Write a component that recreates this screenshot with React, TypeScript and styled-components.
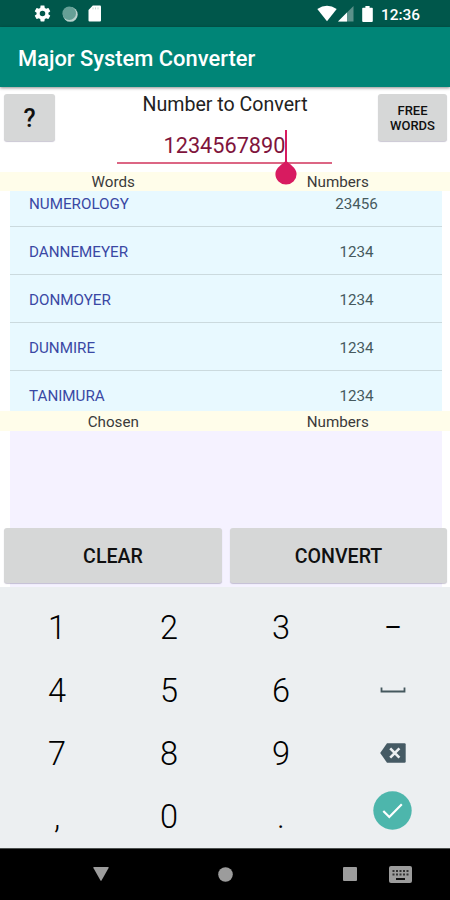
import React from "react";
import styled, { createGlobalStyle } from "styled-components";

const GlobalStyle = createGlobalStyle`
  * { box-sizing: border-box; }
  body { margin: 0; background: #fff; font-family: Roboto, "Liberation Sans", sans-serif; }
  button { font-family: inherit; border: 0; padding: 0; margin: 0; }
`;

const Screen = styled.div`
  width: 450px;
  height: 900px;
  display: flex;
  flex-direction: column;
  overflow: hidden;
  background: #fff;
`;

const StatusBar = styled.header`
  flex: 0 0 27px;
  display: flex;
  align-items: center;
  justify-content: space-between;
  padding: 0 30px 0 33px;
  background: #00574b;
  color: #fff;
`;

const StatusGroup = styled.div<{ $gap: number }>`
  display: flex;
  align-items: center;
  gap: ${(p) => p.$gap}px;
`;

const Clock = styled.span`
  font-size: 15.4px;
  font-weight: 500;
  line-height: 18px;
  padding-top: 2px;
`;

const AppBar = styled.div`
  flex: 0 0 60px;
  display: flex;
  align-items: center;
  padding: 3px 18px 0;
  background: #008577;
  color: #fff;
  z-index: 1;
  box-shadow: 0 1px 3px rgba(0, 0, 0, 0.45);
`;

const Title = styled.h1`
  margin: 0;
  font-size: 21.9px;
  font-weight: 500;
`;

const InputPanel = styled.section`
  flex: 0 0 85px;
  display: grid;
  grid-template-columns: 51px 1fr 69px;
  padding: 7px 3px 0 4px;
`;

const GreyButton = styled.button<{ $size: number; $height: number; $drop?: number }>`
  height: ${(p) => p.$height}px;
  padding-top: ${(p) => p.$drop ?? 0}px;
  border-radius: 3px;
  background: #d6d7d7;
  color: #101010;
  font-size: ${(p) => p.$size}px;
  font-weight: 500;
  line-height: 15px;
  box-shadow: 0 1px 1px rgba(80, 70, 110, 0.3);
`;

const Field = styled.div`
  display: flex;
  flex-direction: column;
  align-items: center;
  margin-left: 17px;
`;

const FieldLabel = styled.label`
  font-size: 19.6px;
  line-height: 22px;
  color: #222;
`;

const NumberInput = styled.div`
  position: relative;
  width: 215px;
  height: 48px;
  margin-right: 2px;
  border-bottom: 2px solid #dc6684;
  display: flex;
  justify-content: center;
  align-items: center;
  padding: 13px 0 0 1px;
  font-size: 21.7px;
  color: #80143c;
`;

const Caret = styled.svg`
  position: absolute;
  left: 158px;
  top: 14px;
  z-index: 2;
`;

const ColumnHeader = styled.div<{ $height: number }>`
  flex: 0 0 ${(p) => p.$height}px;
  display: grid;
  grid-template-columns: 1fr 1fr;
  align-items: center;
  text-align: center;
  padding: 2px 0 0 1px;
  background: #fffdea;
  color: #3a3a3a;
  font-size: 15.2px;
  line-height: 17px;
`;

const WordList = styled.ul`
  flex: 0 0 220px;
  display: flex;
  flex-direction: column;
  justify-content: flex-end;
  margin: 0 8.5px 0 9.5px;
  padding: 0;
  overflow: hidden;
  list-style: none;
  background: #e8f9ff;
`;

const WordRow = styled.li`
  flex: 0 0 48.1px;
  display: grid;
  grid-template-columns: 262px 170px;
  align-items: center;
  padding-top: 3px;
  border-bottom: 1px solid #cbdade;
  font-size: 15.2px;

  &:last-child {
    flex-basis: 40px;
    align-items: start;
    padding-top: 15.5px;
    border-bottom: 0;
  }
`;

const Word = styled.span`
  padding-left: 19.5px;
  color: #3a48a4;
`;

const Code = styled.span`
  text-align: center;
  color: #465a5e;
`;

const ChosenPanel = styled.section`
  flex: 0 0 156px;
  display: flex;
  align-items: flex-end;
  padding: 0 3px 4px 4px;
  background: linear-gradient(#f5f2ff, #f5f2ff) 9.5px 0 / 432px 100% no-repeat;
`;

const ActionRow = styled.div`
  flex: 1;
  display: grid;
  grid-template-columns: 218px 217px;
  gap: 8px;
`;

const Keypad = styled.section`
  flex: 0 0 261px;
  display: grid;
  grid-template-columns: repeat(4, 112px);
  grid-template-rows: repeat(4, 63.25px);
  padding: 8px 1px 0;
  background: #eceff1;
`;

const Key = styled.div`
  display: flex;
  align-items: center;
  justify-content: center;
  padding-top: 2px;
  font-size: 32.5px;
  font-weight: 300;
  color: #000;
`;

const DashKey = styled(Key)`
  font-size: 27px;
  font-weight: 400;
`;

const IconKey = styled(Key)<{ $lift?: number }>`
  padding: 0 1px ${(p) => p.$lift ?? 0}px 0;
`;

const NavBar = styled.nav`
  flex: 1;
  display: grid;
  grid-template-columns: 202px 47px 76px 50px 50px;
  align-items: center;
  justify-items: center;
  padding-bottom: 1px;
  background: #000;
  color: #9c9c9c;
  border-top: 1px solid #4c504f;
`;

const GearIcon = () => (
  <svg width="19" height="19" viewBox="0 0 24 24" fill="#fff">
    <path d="M19.43 12.98c.04-.32.07-.64.07-.98s-.03-.66-.07-.98l2.11-1.65c.19-.15.24-.42.12-.64l-2-3.46c-.12-.22-.39-.3-.61-.22l-2.49 1c-.52-.4-1.08-.73-1.69-.98l-.38-2.65C14.46 2.18 14.25 2 14 2h-4c-.25 0-.46.18-.49.42l-.38 2.65c-.61.25-1.17.59-1.69.98l-2.49-1c-.23-.09-.49 0-.61.22l-2 3.46c-.13.22-.07.49.12.64l2.11 1.65c-.04.32-.07.65-.07.98s.03.66.07.98l-2.11 1.65c-.19.15-.24.42-.12.64l2 3.46c.12.22.39.3.61.22l2.49-1c.52.4 1.08.73 1.69.98l.38 2.65c.03.24.24.42.49.42h4c.25 0 .46-.18.49-.42l.38-2.65c.61-.25 1.17-.59 1.69-.98l2.49 1c.23.09.49 0 .61-.22l2-3.46c.12-.22.07-.49-.12-.64l-2.11-1.65zM12 15.5a3.5 3.5 0 1 1 0-7 3.5 3.5 0 0 1 0 7z" />
  </svg>
);

const SyncIcon = () => (
  <svg width="16" height="16" viewBox="0 0 16 16">
    <circle cx="8.3" cy="8.4" r="7.4" fill="#b9d2cd" />
    <circle cx="7.2" cy="7.2" r="6.8" fill="#65a096" />
  </svg>
);

const CardIcon = () => (
  <svg width="14" height="17" viewBox="0 0 14 17">
    <path d="M4.8 0.5H12a1 1 0 0 1 1 1v14a1 1 0 0 1-1 1H1.5a1 1 0 0 1-1-1V5z" fill="#fff" />
    <path d="M5 2.4v2M7.5 2.4v2M10 2.4v2" stroke="#c5d8d4" strokeWidth="1" />
  </svg>
);

const WifiIcon = () => (
  <svg width="20" height="17" viewBox="0 0 20 17">
    <path d="M0.3 4Q10-2.7 19.7 4L10 16.3z" fill="#fff" />
  </svg>
);

const SignalIcon = () => (
  <svg width="16" height="16" viewBox="0 0 16 16">
    <path d="M0 15.5 15.5 0v15.5z" fill="#5c918a" />
    <path d="M0 15.5 9 6.5v9z" fill="#fff" />
  </svg>
);

const BatteryIcon = () => (
  <svg width="11" height="18" viewBox="0 0 11 18">
    <path d="M3.4 1h4.2v1.8H10a.8.8 0 0 1 .8.8V16a1 1 0 0 1-1 1H1.2a1 1 0 0 1-1-1V3.6a.8.8 0 0 1 .8-.8h2.4z" fill="#fff" />
  </svg>
);

const SpaceIcon = () => (
  <svg width="26" height="8" viewBox="0 0 26 8">
    <path d="M1.5 1.5V5.5H24.5V1.5" fill="none" stroke="#45585e" strokeWidth="1.8" />
  </svg>
);

const BackspaceIcon = () => (
  <svg width="26" height="20" viewBox="0 0 26 20">
    <path d="M7 0.3H24.5a1.2 1.2 0 0 1 1.2 1.2v17a1.2 1.2 0 0 1-1.2 1.2H7L0.2 10z" fill="#455a64" />
    <path d="M10.2 5.3l9.2 9.4M19.4 5.3l-9.2 9.4" stroke="#eceff1" strokeWidth="2.6" />
  </svg>
);

const DoneIcon = () => (
  <svg width="39" height="39" viewBox="0 0 39 39">
    <circle cx="19.5" cy="19.5" r="19.2" fill="#4db6ac" />
    <path d="M10.3 20l6 6L28.8 13.3" fill="none" stroke="#fff" strokeWidth="2.2" />
  </svg>
);

const BackIcon = () => (
  <svg width="16" height="14" viewBox="0 0 16 14">
    <path d="M1 0h14a.7.7 0 0 1 .6 1L8.5 13.5a.6.6 0 0 1-1 0L.4 1A.7.7 0 0 1 1 0z" fill="currentColor" />
  </svg>
);

const HomeIcon = () => (
  <svg width="15" height="15" viewBox="0 0 15 15">
    <circle cx="7.5" cy="7.5" r="7.3" fill="currentColor" />
  </svg>
);

const RecentsIcon = () => (
  <svg width="14" height="14" viewBox="0 0 14 14">
    <rect width="14" height="14" rx="1" fill="currentColor" />
  </svg>
);

const KeyboardIcon = () => (
  <svg width="23" height="17" viewBox="0 0 23 17">
    <rect width="23" height="17" rx="2" fill="currentColor" />
    <path d="M3.5 5h16M3.5 8.5h16" stroke="#333" strokeWidth="2.2" strokeDasharray="2 1.5" />
    <path d="M7 13h9" stroke="#000" strokeWidth="1.8" />
  </svg>
);

const words: [string, string][] = [
  ["NUMEROLOGY", "23456"],
  ["DANNEMEYER", "1234"],
  ["DONMOYER", "1234"],
  ["DUNMIRE", "1234"],
  ["TANIMURA", "1234"],
];

export default function App() {
  return (
    <>
      <GlobalStyle />
      <Screen>
        <StatusBar>
          <StatusGroup $gap={10}>
            <GearIcon />
            <SyncIcon />
            <CardIcon />
          </StatusGroup>
          <StatusGroup $gap={8}>
            <StatusGroup $gap={1}>
              <WifiIcon />
              <SignalIcon />
            </StatusGroup>
            <BatteryIcon />
            <Clock>12:36</Clock>
          </StatusGroup>
        </StatusBar>
        <AppBar>
          <Title>Major System Converter</Title>
        </AppBar>
        <InputPanel>
          <GreyButton $size={25} $height={47} $drop={2}>?</GreyButton>
          <Field>
            <FieldLabel>Number to Convert</FieldLabel>
            <NumberInput>
              1234567890
              <Caret width="22" height="56" viewBox="0 0 22 56">
                <path d="M11 0v32" stroke="#d81b60" strokeWidth="2" />
                <path d="M11 30.5C14 34 21.6 37.5 21.6 44a10.6 10.6 0 0 1-21.2 0C.4 37.5 8 34 11 30.5z" fill="#d81b60" />
              </Caret>
            </NumberInput>
          </Field>
          <GreyButton $size={13} $height={47}>FREE<br />WORDS</GreyButton>
        </InputPanel>
        <ColumnHeader $height={19}>
          <span>Words</span>
          <span>Numbers</span>
        </ColumnHeader>
        <WordList>
          {words.map(([word, code]) => (
            <WordRow key={word}>
              <Word>{word}</Word>
              <Code>{code}</Code>
            </WordRow>
          ))}
        </WordList>
        <ColumnHeader $height={20}>
          <span>Chosen</span>
          <span>Numbers</span>
        </ColumnHeader>
        <ChosenPanel>
          <ActionRow>
            <GreyButton $size={19.6} $height={55} $drop={2}>CLEAR</GreyButton>
            <GreyButton $size={19.6} $height={55} $drop={2}>CONVERT</GreyButton>
          </ActionRow>
        </ChosenPanel>
        <Keypad>
          <Key>1</Key>
          <Key>2</Key>
          <Key>3</Key>
          <DashKey>–</DashKey>
          <Key>4</Key>
          <Key>5</Key>
          <Key>6</Key>
          <IconKey><SpaceIcon /></IconKey>
          <Key>7</Key>
          <Key>8</Key>
          <Key>9</Key>
          <IconKey><BackspaceIcon /></IconKey>
          <Key>,</Key>
          <Key>0</Key>
          <Key>.</Key>
          <IconKey $lift={12}><DoneIcon /></IconKey>
        </Keypad>
        <NavBar>
          <BackIcon />
          <HomeIcon />
          <span />
          <RecentsIcon />
          <KeyboardIcon />
        </NavBar>
      </Screen>
    </>
  );
}
